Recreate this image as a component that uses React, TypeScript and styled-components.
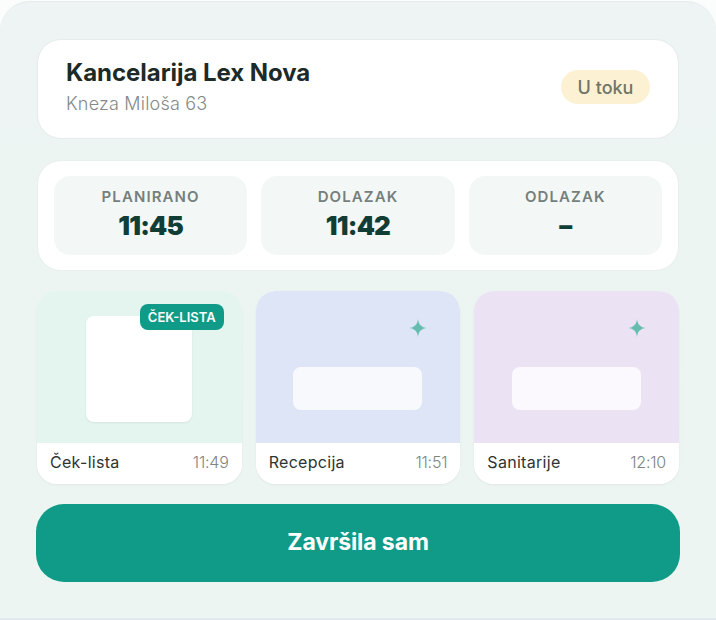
import styled, { createGlobalStyle } from "styled-components";

const GlobalStyle = createGlobalStyle`
  html, body {
    margin: 0;
    padding: 0;
    background: #fbfcfc;
  }
  * {
    box-sizing: border-box;
  }
`;

const Panel = styled.div`
  width: 716px;
  height: 620px;
  padding-top: 1px;
  background: linear-gradient(#fbfcfc 600px, #e3eaef 600px);
  font-family: Inter, "Noto Sans", sans-serif;
`;

const Sheet = styled.div`
  height: 617px;
  padding: 37px 37px 0;
  display: flex;
  flex-direction: column;
  background: linear-gradient(#edf4f3, #ecf5f1);
  border-top: 1px solid #e6ebec;
  border-radius: 30px 30px 0 0;
`;

const HeaderCard = styled.div`
  height: 100px;
  padding: 0 28px;
  display: flex;
  justify-content: space-between;
  background: #fff;
  border: 1px solid #e6ebeb;
  border-radius: 24px;
`;

const HeaderText = styled.div`
  padding-top: 18px;
`;

const Title = styled.h1`
  margin: 0;
  font-size: 24px;
  line-height: 30px;
  font-weight: 700;
  letter-spacing: -0.05px;
  color: #1c2b28;
`;

const Address = styled.div`
  margin-top: 4px;
  font-size: 18px;
  line-height: 24px;
  font-weight: 300;
  letter-spacing: 0.2px;
  color: #838a89;
`;

const StatusPill = styled.div`
  width: 89px;
  height: 34px;
  margin-top: 30px;
  display: flex;
  align-items: center;
  justify-content: center;
  background: #fdf1d4;
  border-radius: 17px;
  font-size: 18px;
  font-weight: 500;
  color: #6f7568;
`;

const StatsCard = styled.div`
  height: 111px;
  margin-top: 21px;
  padding: 15px 16px;
  display: grid;
  grid-template-columns: repeat(3, 1fr);
  gap: 14px;
  background: #fff;
  border: 1px solid #e9eeee;
  border-radius: 24px;
`;

const Stat = styled.div`
  display: flex;
  flex-direction: column;
  align-items: center;
  padding-top: 12px;
  background: #f3f8f7;
  border-radius: 16px;
`;

const StatLabel = styled.div`
  font-size: 15px;
  line-height: 18px;
  font-weight: 600;
  letter-spacing: 1.1px;
  color: #757f7d;
`;

const StatValue = styled.div`
  margin-top: 4px;
  font-size: 26px;
  line-height: 32px;
  font-weight: 900;
  letter-spacing: -0.8px;
  color: #123d35;
`;

const Tiles = styled.div`
  margin-top: 20px;
  display: grid;
  grid-template-columns: repeat(3, 1fr);
  gap: 14px;
`;

const Tile = styled.div`
  position: relative;
  height: 193px;
  display: flex;
  flex-direction: column;
  overflow: hidden;
  background: #fff;
  border-radius: 20px;
  box-shadow: 0 1px 2px rgba(60, 90, 80, 0.08);
`;

const TileArt = styled.div<{ $bg: string }>`
  flex: 1;
  display: flex;
  align-items: flex-end;
  justify-content: center;
  background: ${(p) => p.$bg};
`;

const SquareSheet = styled.div`
  width: 106px;
  height: 106px;
  margin-bottom: 21px;
  background: #fff;
  border-radius: 8px;
  box-shadow: 0 1px 2px rgba(40, 70, 60, 0.08);
`;

const WideSheet = styled.div`
  width: 129px;
  height: 43px;
  margin-bottom: 33px;
  background: rgba(255, 255, 255, 0.78);
  border-radius: 8px;
`;

const Badge = styled.div`
  position: absolute;
  top: 13px;
  right: 18px;
  height: 26px;
  padding: 0 8px;
  display: flex;
  align-items: center;
  background: #0f9b88;
  border-radius: 8px;
  font-size: 13px;
  font-weight: 600;
  color: #fff;
`;

const Sparkle = styled.svg`
  position: absolute;
  top: 28px;
  right: 33px;
  width: 18px;
  height: 18px;
  fill: #67bcb0;
`;

const TileFooter = styled.div`
  height: 41px;
  padding: 0 13px 3px;
  display: flex;
  align-items: center;
  justify-content: space-between;
  background: #fff;
`;

const TileName = styled.span`
  font-size: 16px;
  font-weight: 400;
  letter-spacing: 0.3px;
  color: #2d3534;
`;

const TileTime = styled.span`
  font-size: 16px;
  font-weight: 300;
  letter-spacing: -0.2px;
  color: #7d8584;
`;

const DoneButton = styled.button`
  height: 78px;
  margin: 20px -1px 0;
  padding-bottom: 3px;
  flex-shrink: 0;
  background: #0f9b88;
  border: none;
  border-radius: 28px;
  font-family: inherit;
  font-size: 23px;
  font-weight: 700;
  letter-spacing: -0.1px;
  color: #fff;
`;

const stats = [
  { label: "PLANIRANO", value: "11:45" },
  { label: "DOLAZAK", value: "11:42" },
  { label: "ODLAZAK", value: "–" },
];

function SparkleIcon() {
  return (
    <Sparkle viewBox="0 0 18 18">
      <path d="M9 0 C9.6 5.6 12.4 8.4 18 9 C12.4 9.6 9.6 12.4 9 18 C8.4 12.4 5.6 9.6 0 9 C5.6 8.4 8.4 5.6 9 0 Z" />
    </Sparkle>
  );
}

export default function App() {
  return (
    <Panel>
      <GlobalStyle />
      <Sheet>
        <HeaderCard>
          <HeaderText>
            <Title>Kancelarija Lex Nova</Title>
            <Address>Kneza Miloša 63</Address>
          </HeaderText>
          <StatusPill>U toku</StatusPill>
        </HeaderCard>

        <StatsCard>
          {stats.map((s) => (
            <Stat key={s.label}>
              <StatLabel>{s.label}</StatLabel>
              <StatValue>{s.value}</StatValue>
            </Stat>
          ))}
        </StatsCard>

        <Tiles>
          <Tile>
            <TileArt $bg="#e4f4ef">
              <SquareSheet />
            </TileArt>
            <Badge>ČEK-LISTA</Badge>
            <TileFooter>
              <TileName>Ček-lista</TileName>
              <TileTime>11:49</TileTime>
            </TileFooter>
          </Tile>
          <Tile>
            <TileArt $bg="#dde5f6">
              <WideSheet />
            </TileArt>
            <SparkleIcon />
            <TileFooter>
              <TileName>Recepcija</TileName>
              <TileTime>11:51</TileTime>
            </TileFooter>
          </Tile>
          <Tile>
            <TileArt $bg="#ebe2f3">
              <WideSheet />
            </TileArt>
            <SparkleIcon />
            <TileFooter>
              <TileName>Sanitarije</TileName>
              <TileTime>12:10</TileTime>
            </TileFooter>
          </Tile>
        </Tiles>

        <DoneButton>Završila sam</DoneButton>
      </Sheet>
    </Panel>
  );
}
